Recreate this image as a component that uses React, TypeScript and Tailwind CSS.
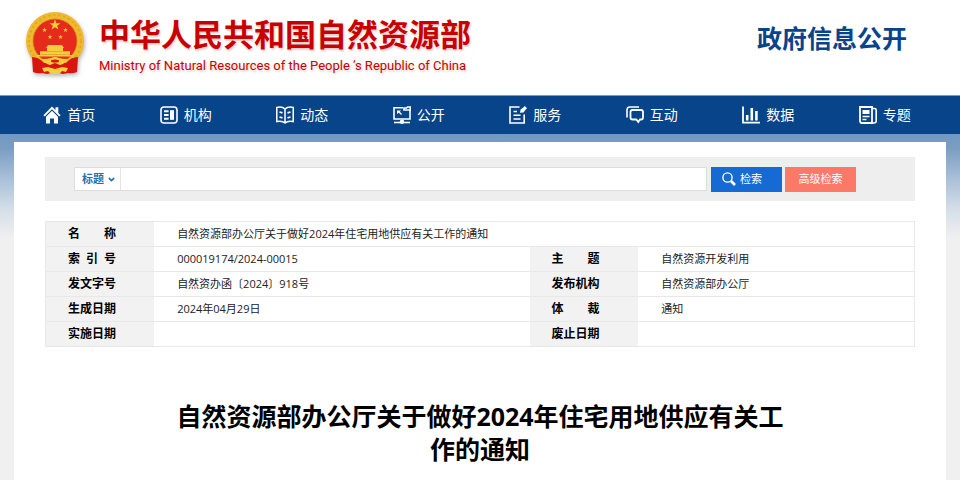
import React from 'react';
import { ChevronDown } from 'lucide-react';

const line = { fill: 'none', stroke: 'currentColor', strokeWidth: 1.6 };

function Icon({ children }: { children: React.ReactNode }) {
	return (
		<svg viewBox="0 0 18 18" className="size-[18px] shrink-0" aria-hidden="true">
			{children}
		</svg>
	);
}

const navItems = [
	{
		label: '首页',
		icon: (
			<Icon>
				<path d="M9 .6.4 9.2l1.3 1.3L9 3.2l7.3 7.3 1.3-1.3-2.3-2.3V1.3h-2.8v2.8z" fill="currentColor" />
				<path d="M9 4.8 3 10.8V17.6h4V12.4h4v5.2h4v-6.8z" fill="currentColor" />
			</Icon>
		),
	},
	{
		label: '机构',
		icon: (
			<Icon>
				<rect x="1" y="1" width="16" height="16" rx="3" {...line} />
				<path d="M4 5.2h4.6M4 9h4.6M4 12.8h4.6" {...line} strokeWidth={2} />
				<rect x="10" y="4.2" width="4" height="9.6" fill="currentColor" />
			</Icon>
		),
	},
	{
		label: '动态',
		icon: (
			<Icon>
				<path d="M9 3C7 1 3.5.8.8 1.4v14.2C3.5 15 7 15.2 9 17c2-1.8 5.5-2 8.2-1.4V1.4C14.5.8 11 1 9 3zM9 3v14" {...line} strokeWidth={1.5} />
				<path d="M3.5 6l3 .8M3.5 11l3 .8M11.5 6.8l3-.8M11.5 11.8l3-.8" {...line} strokeWidth={1.8} />
			</Icon>
		),
	},
	{
		label: '公开',
		icon: (
			<Icon>
				<path d="M10 1.8H1v11.2h16V4" {...line} />
				<path d="M11 4V2h2.5l1-1h2.7v3z" {...line} />
				<path d="M4 4.5h4L6.8 5.7l2.2 2.2-1 1-2.2-2.2L4 8z" fill="currentColor" />
				<path d="M1 16.5h16" {...line} />
				<circle cx="9" cy="15.8" r="2.2" fill="currentColor" />
			</Icon>
		),
	},
	{
		label: '服务',
		icon: (
			<Icon>
				<path d="M10.5 1H1v16h14.2V8.5" {...line} />
				<path d="M4.5 5.5H8M4.5 9.2h7M4.5 13h7" {...line} />
				<path d="M11 6.8 11.6 3.5 14 1.8 15.8 0 18 2.2 16.3 4l-1.8 2.4z" fill="currentColor" />
			</Icon>
		),
	},
	{
		label: '互动',
		icon: (
			<Icon>
				<path d="M1 11.5V4c0-1.8 1-3 2.8-3H13" {...line} />
				<path d="M6.5 4h8.5q2 0 2 2v5.5q0 2-2 2h-1L12.3 16l-2-2.5H6.5q-2 0-2-2V6q0-2 2-2z" {...line} strokeWidth={1.8} />
			</Icon>
		),
	},
	{
		label: '数据',
		icon: (
			<Icon>
				<path d="M1 .5v16.2h17" {...line} strokeWidth={1.8} />
				<path d="M5.2 9v5.5M9.8 2v12.5M14.4 5v9.5" {...line} strokeWidth={2.6} />
			</Icon>
		),
	},
	{
		label: '专题',
		icon: (
			<Icon>
				<path d="M1 1h12v16H3q-2 0-2-2z" {...line} strokeWidth={1.8} />
				<path d="M13 2.5h2.5q1.7 0 1.7 1.5v11q0 2-2.2 2h-2" {...line} />
				<rect x="3.5" y="4" width="7" height="4" fill="currentColor" />
				<path d="M3.5 10.5h7M3.5 13.5h4" {...line} strokeWidth={1.4} />
			</Icon>
		),
	},
];

const rows = [
	['索\u2002引\u2002号', '000019174/2024-00015', '主\u3000\u3000题', '自然资源开发利用'],
	['发文字号', '自然资办函〔2024〕918号', '发布机构', '自然资源部办公厅'],
	['生成日期', '2024年04月29日', '体\u3000\u3000裁', '通知'],
	['实施日期', '', '废止日期', ''],
];

function Emblem() {
	const star = 'M0-5 1.2-1.6 4.8-1.6 1.9.6 3 4 0 1.9-3 4-1.9.6-4.8-1.6-1.2-1.6z';
	return (
		<svg viewBox="0 0 60 66" className="h-[66px] w-[60px] shrink-0 drop-shadow-[1px_2px_2px_rgba(0,0,0,0.3)]" role="img" aria-label="国徽">
			<circle cx="30" cy="30" r="29" fill="#efb82d" />
			<circle cx="30" cy="30" r="26" fill="none" stroke="#dda224" strokeWidth="1.5" strokeDasharray="2 3" />
			<circle cx="30" cy="30" r="22" fill="#e62a1c" stroke="#c98a18" strokeWidth=".8" />
			<path d="M7 46q7 0 12 6l11-3 11 3q5-6 12-6l-1 15q-5 2-9 1l-5 1-8-2-8 2-5-1q-5 1-9-1z" fill="#d8150f" />
			<g fill="#f6ce3c">
				<path d={star} transform="translate(30 14) scale(1.15)" />
				<path d={star} transform="translate(19.5 19) scale(.5)" />
				<path d={star} transform="translate(40.5 19) scale(.5)" />
				<path d={star} transform="translate(25 26) scale(.5)" />
				<path d={star} transform="translate(35.5 26) scale(.5)" />
				<path d="M23 34h14l2 3h-1v3h7v4h3v1.5H12V44h3v-4h7v-3h-1z" />
				<path d="M17 48q6 0 9-1 4-2 8 0 3 1 9 1-3 5-8 6l-5-2-5 2q-5-1-8-6z" />
				<path d="M17 57l6-1 7 2 7-2 6 1-2 4-4-1-3 3h-8l-3-3-4 1z" />
			</g>
			<path d="M15 40.5h30M15 43.5h30" stroke="#d99a1b" strokeWidth=".6" />
			<ellipse cx="30" cy="50" rx="4" ry="1.5" fill="#d8150f" />
		</svg>
	);
}

function DocumentInfo() {
	const label = 'bg-[#f2f2f2] pl-[22px] text-left text-[12px] font-bold';
	const value = 'pl-[23px] text-[11px] text-[#222]';
	return (
		<table className="mt-5 w-full table-fixed border-collapse border border-[#e8e8e8]">
			<colgroup>
				<col className="w-[12.5%]" />
				<col className="w-[43.2%]" />
				<col className="w-[12.5%]" />
				<col />
			</colgroup>
			<tbody>
				<tr className="h-[25px] border-b border-[#e8e8e8]">
					<th scope="row" className={label}>名{'\u3000\u3000'}称</th>
					<td colSpan={3} className={value}>自然资源部办公厅关于做好2024年住宅用地供应有关工作的通知</td>
				</tr>
				{rows.map(([nameA, valueA, nameB, valueB]) => (
					<tr key={nameA} className="h-[25px] border-b border-[#e8e8e8]">
						<th scope="row" className={label}>{nameA}</th>
						<td className={value}>{valueA}</td>
						<th scope="row" className={label}>{nameB}</th>
						<td className={value}>{valueB}</td>
					</tr>
				))}
			</tbody>
		</table>
	);
}

function SearchBar() {
	return (
		<form className="flex h-[44px] items-center bg-[#eee] pr-[59px] pl-[29px]" onSubmit={(e) => e.preventDefault()}>
			<div className="flex h-6 flex-1 border border-[#ddd] bg-white">
				<div className="relative w-[46px] border-r border-[#e5e5e5] text-[#1a6fb5]">
					<select aria-label="检索范围" className="block h-[22px] w-full appearance-none bg-transparent pl-[7px] text-[11px] leading-[18px] font-bold outline-none">
						<option>标题</option>
					</select>
					<ChevronDown className="pointer-events-none absolute top-[7px] right-1 size-[9px]" strokeWidth={4} />
				</div>
				<input type="text" aria-label="检索词" className="min-w-0 flex-1 px-2 text-[12px] outline-none" />
			</div>
			<button type="submit" className="ml-1 flex h-[25px] w-[71px] items-center gap-1 bg-[#156ad3] pl-[11px] text-[11px] text-white">
				<svg viewBox="0 0 14 14" className="size-[14px]" aria-hidden="true">
					<circle cx="5.5" cy="5.5" r="4.6" fill="none" stroke="currentColor" strokeWidth="1.4" />
					<path d="m9 9 4 4" stroke="currentColor" strokeWidth="2.6" />
				</svg>
				检索
			</button>
			<button type="button" className="ml-[3px] h-[25px] w-[71px] bg-[#fc7968] text-[11px] text-white">高级检索</button>
		</form>
	);
}

function App() {
	return (
		<div className="min-h-screen bg-white font-['Open_Sans','Noto_Sans_CJK_SC',sans-serif] text-black">
			<header className="flex h-[95px] items-center justify-between pr-[53px] pb-[7px] pl-[25px]">
				<a href="#" className="flex items-center gap-[14px]">
					<Emblem />
					<div className="pt-1 text-[#c90000] [text-shadow:1px_2px_2px_rgba(150,0,0,0.2)]">
						<h1 className="text-[31px] leading-[38px] font-bold">中华人民共和国自然资源部</h1>
						<p className="mt-px font-['Roboto',sans-serif] text-[13px] leading-[24px]">Ministry of Natural Resources of the People ’s Republic of China</p>
					</div>
				</a>
				<a href="#" className="pb-[12px] text-[25px] leading-[38px] font-bold text-[#07448a]">政府信息公开</a>
			</header>
			<nav className="grid h-[39px] grid-cols-8 border-t border-[#7f99b5] bg-[#07448a] pr-[17px] pl-[11px] text-[14px] text-white">
				{navItems.map((item) => (
					<a key={item.label} href="#" className="flex items-center justify-center gap-[6px] pb-px">
						{item.icon}
						{item.label}
					</a>
				))}
			</nav>
			<main className="bg-[linear-gradient(to_bottom,#7398c0_0,#7a9dc3_14px,#a9c0d8_45px,#d5dee8_75px,#f0f0f0_105px)] px-[14px] pt-2">
				<div className="min-h-[338px] bg-white px-[31px] pt-[15px]">
					<SearchBar />
					<DocumentInfo />
					<h2 className="mx-auto mt-[53px] max-w-[620px] text-center text-[25px] leading-[33px] font-bold">
						自然资源部办公厅关于做好2024年住宅用地供应有关工作的通知
					</h2>
				</div>
			</main>
		</div>
	);
}

export default App;
